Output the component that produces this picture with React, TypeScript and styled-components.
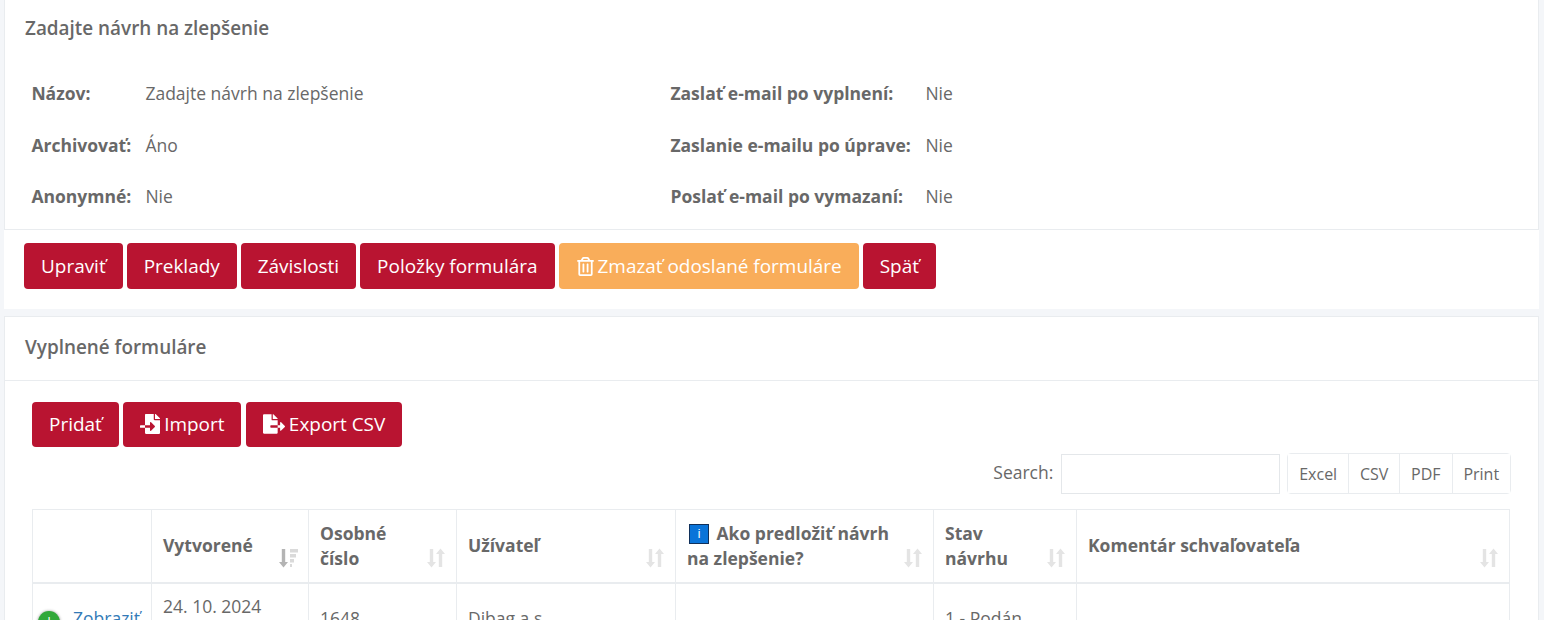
import React from 'react';
import styled, { createGlobalStyle } from 'styled-components';
import { FaRegTrashAlt, FaFileImport, FaFileExport } from 'react-icons/fa';

const GlobalStyle = createGlobalStyle`
  html, body {
    margin: 0;
    height: 620px;
    overflow: hidden;
    background: #f4f6f9;
    font-family: "Open Sans", "Liberation Sans", sans-serif;
    color: #686868;
  }
`;

const details = [
  { label: 'Názov:', value: 'Zadajte návrh na zlepšenie', side: 'Zaslať e-mail po vyplnení:', sideValue: 'Nie' },
  { label: 'Archivovať:', value: 'Áno', side: 'Zaslanie e-mailu po úprave:', sideValue: 'Nie' },
  { label: 'Anonymné:', value: 'Nie', side: 'Poslať e-mail po vymazaní:', sideValue: 'Nie' },
];

const SortIcon = () => (
  <svg width="18" height="20" viewBox="0 0 18 20" fill="currentColor">
    <path d="M2.8 1h3.4v13H9l-4.5 5.5L0 14h2.8z" />
    <path d="M11.8 19h3.4V6H18l-4.5-5.5L9 6h2.8z" />
  </svg>
);

const SortedIcon = () => (
  <svg width="19" height="20" viewBox="0 0 19 20">
    <path fill="#b4b4b4" d="M2.8 1h3.4v13H9l-4.5 5.5L0 14h2.8z" />
    <path fill="#dadada" d="M11 1h8v3.6h-8zM11 6h6v3.6h-6zM11 11h4v3.6h-4zM11 16h2v3h-2z" />
  </svg>
);

const App = () => {
  return (
    <>
      <GlobalStyle />
      <Page>
        <Card>
          <TopTitle>Zadajte návrh na zlepšenie</TopTitle>
          <DetailGrid>
            {details.map(row => (
              <React.Fragment key={row.label}>
                <Label>{row.label}</Label>
                <Value>{row.value}</Value>
                <Label>{row.side}</Label>
                <Value>{row.sideValue}</Value>
              </React.Fragment>
            ))}
          </DetailGrid>
        </Card>
        <ActionBar>
          <Button>Upraviť</Button>
          <Button>Preklady</Button>
          <Button>Závislosti</Button>
          <Button>Položky formulára</Button>
          <Button $warning><FaRegTrashAlt size={19} /> Zmazať odoslané formuláre</Button>
          <Button>Späť</Button>
        </ActionBar>
        <FormsCard>
          <CardHeader>Vyplnené formuláre</CardHeader>
          <CardBody>
            <Toolbar>
              <Button>Pridať</Button>
              <Button><FaFileImport size={20} /> Import</Button>
              <Button><FaFileExport size={22} /> Export CSV</Button>
            </Toolbar>
            <TableTools>
              <SearchLabel>Search:</SearchLabel>
              <SearchInput />
              <ExportGroup>
                <ExportButton>Excel</ExportButton>
                <ExportButton>CSV</ExportButton>
                <ExportButton>PDF</ExportButton>
                <ExportButton>Print</ExportButton>
              </ExportGroup>
            </TableTools>
            <Table>
              <colgroup>
                <col width="119" />
                <col width="157" />
                <col width="148" />
                <col width="219" />
                <col width="258" />
                <col width="143" />
                <col />
              </colgroup>
              <thead>
                <tr>
                  <Th />
                  <Th>Vytvorené<SortSlot $active><SortedIcon /></SortSlot></Th>
                  <Th>Osobné<br />číslo<SortSlot><SortIcon /></SortSlot></Th>
                  <Th>Užívateľ<SortSlot><SortIcon /></SortSlot></Th>
                  <Th><InfoBadge>i</InfoBadge> Ako predložiť návrh na zlepšenie?<SortSlot><SortIcon /></SortSlot></Th>
                  <Th>Stav<br />návrhu<SortSlot><SortIcon /></SortSlot></Th>
                  <Th>Komentár schvaľovateľa<SortSlot><SortIcon /></SortSlot></Th>
                </tr>
              </thead>
              <tbody>
                <tr>
                  <Td><RowToggle>+</RowToggle><RowLink>Zobraziť</RowLink></Td>
                  <Td>24. 10. 2024<br />10:21</Td>
                  <Td>1648</Td>
                  <Td>Dibag a.s.</Td>
                  <Td />
                  <Td>1 - Podán</Td>
                  <Td />
                </tr>
              </tbody>
            </Table>
          </CardBody>
        </FormsCard>
      </Page>
    </>
  );
};

export default App;

interface ButtonProps {
  $warning?: boolean;
}

interface SortSlotProps {
  $active?: boolean;
}

const Page = styled.div`
  width: 1535px;
  height: 620px;
  margin-left: 4px;
  overflow: hidden;
`;

const Card = styled.section`
  height: 230px;
  box-sizing: border-box;
  background: #fff;
  border: 1px solid #e9ecef;
  border-top: 0;
`;

const TopTitle = styled.h3`
  margin: 0;
  padding: 16px 20px 0;
  font-size: 18.9px;
  line-height: 25px;
  font-weight: 600;
`;

const DetailGrid = styled.dl`
  display: grid;
  grid-template-columns: 114px 525px 255px 1fr;
  grid-auto-rows: 51.5px;
  align-items: center;
  margin: 0;
  padding: 26.4px 0 0 26.4px;
  font-size: 17.5px;
`;

const Label = styled.dt`
  font-weight: 700;
  white-space: nowrap;
`;

const Value = styled.dd`
  margin: 0;
  white-space: nowrap;
`;

const ActionBar = styled.div`
  height: 79px;
  box-sizing: border-box;
  display: flex;
  gap: 4px;
  padding: 13px 20px 0;
  background: #fff;
`;

const Button = styled.button<ButtonProps>`
  display: inline-flex;
  align-items: center;
  gap: ${props => (props.$warning ? '3px' : '4px')};
  height: 46px;
  padding: 0 17px;
  border: 0;
  border-radius: 4px;
  background: ${props => (props.$warning ? '#f9ad5a' : '#b91431')};
  color: #fff;
  font-family: inherit;
  font-size: 18.95px;
  white-space: nowrap;
`;

const FormsCard = styled.section`
  margin-top: 7px;
  background: #fff;
  border: 1px solid #e9ecef;
  height: 400px;
`;

const CardHeader = styled.h3`
  margin: 0;
  height: 64px;
  box-sizing: border-box;
  padding: 18px 20px 0;
  border-bottom: 1px solid #e9ecef;
  font-size: 18.9px;
  line-height: 25px;
  font-weight: 600;
`;

const CardBody = styled.div`
  padding: 21px 27px 0;
`;

const Toolbar = styled.div`
  display: flex;
  gap: 4.4px;

  ${Button} {
    height: 45px;
    padding-bottom: 2px;
  }
`;

const TableTools = styled.div`
  display: flex;
  justify-content: flex-end;
  align-items: center;
  margin-top: 6px;
`;

const SearchLabel = styled.label`
  margin: 0 8px 4px 0;
  font-size: 17.5px;
`;

const SearchInput = styled.input`
  width: 219px;
  height: 40px;
  box-sizing: border-box;
  border: 1px solid #e4e7ea;
  margin-right: 7px;
  background: #fff;
`;

const ExportGroup = styled.div`
  display: flex;
  height: 41px;
  box-sizing: border-box;
  border: 1px solid #e9ecef;
  border-radius: 4px;
`;

const ExportButton = styled.button`
  padding: 0 10.9px;
  border: 0;
  border-left: 1px solid #e9ecef;
  background: #fff;
  color: #686868;
  font-family: inherit;
  font-size: 16px;

  &:first-child {
    border-left: 0;
  }
`;

const Table = styled.table`
  width: 1478px;
  margin-top: 15px;
  table-layout: fixed;
  border-collapse: collapse;
  font-size: 17.5px;
  line-height: 25px;
`;

const Th = styled.th`
  position: relative;
  height: 73px;
  box-sizing: border-box;
  padding: 10px 30px 10px 11px;
  border: 2px solid #e9ecef;
  border-width: 1px 1px 2px;
  text-align: left;
  font-weight: 700;
`;

const SortSlot = styled.span<SortSlotProps>`
  position: absolute;
  right: ${props => (props.$active ? '10px' : '11px')};
  bottom: 14px;
  display: flex;
  color: #e4e4e4;
`;

const InfoBadge = styled.span`
  display: inline-block;
  width: 20px;
  height: 20px;
  box-sizing: border-box;
  margin: 0 3px 0 2px;
  border: 1px solid #10305a;
  background: #0a74d9;
  color: #fff;
  font-family: "Liberation Sans", sans-serif;
  font-size: 12px;
  font-weight: 400;
  line-height: 18px;
  text-align: center;
  vertical-align: 2px;
`;

const Td = styled.td`
  position: relative;
  height: 70px;
  box-sizing: border-box;
  padding: 10px 11px;
  border: 1px solid #e9ecef;
  white-space: nowrap;
  overflow: hidden;
`;

const RowToggle = styled.span`
  display: inline-block;
  width: 22px;
  height: 22px;
  margin: 0 13px 0 -6px;
  border-radius: 50%;
  background: #31a83a;
  color: #fff;
  font-size: 16px;
  line-height: 21px;
  text-align: center;
  box-shadow: 0 0 3px #999;
  transform: translateY(2px);
`;

const RowLink = styled.a`
  color: #337ab7;
`;
